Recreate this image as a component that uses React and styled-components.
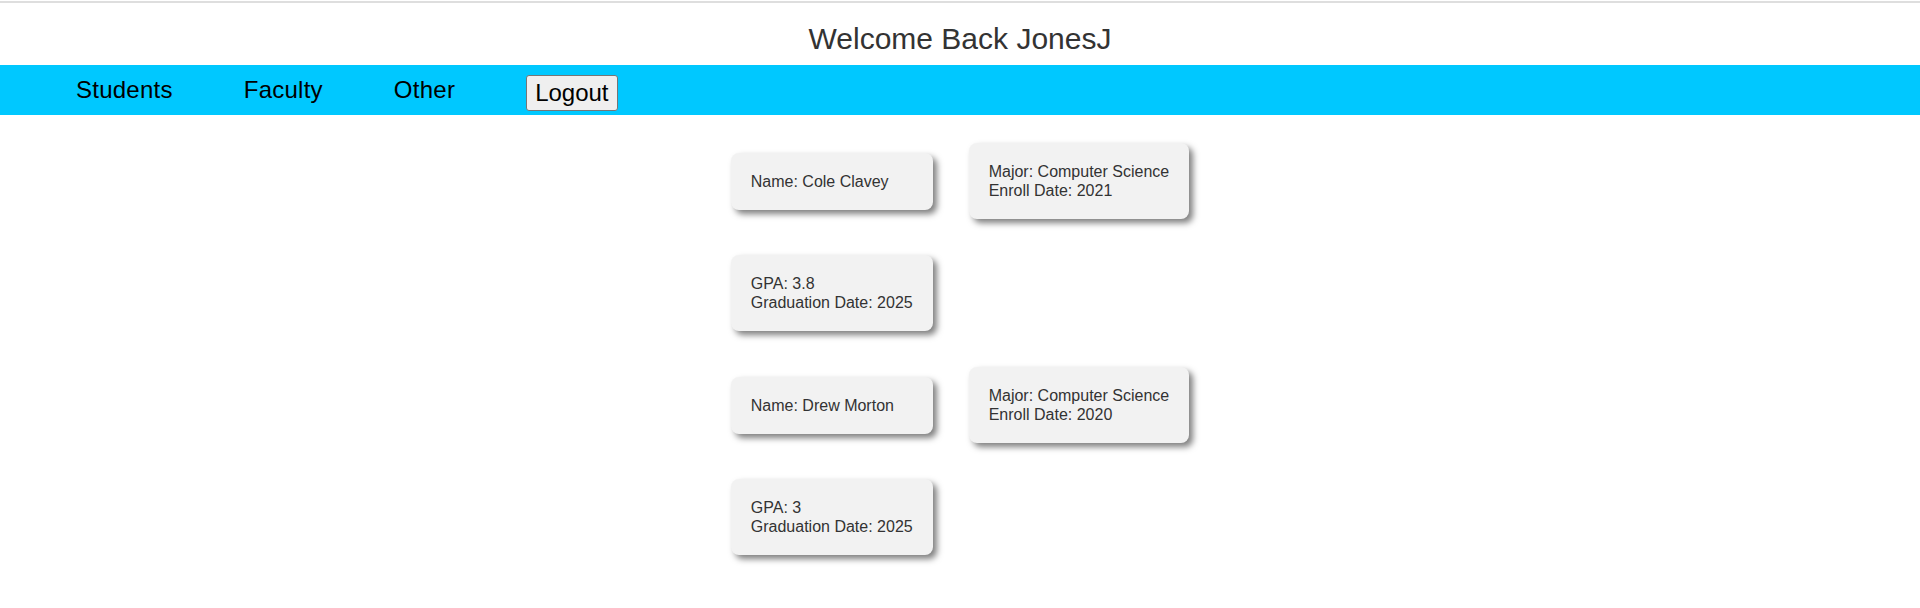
import React from 'react'
import styled, {createGlobalStyle} from 'styled-components'

const GlobalStyle = createGlobalStyle`
  body {
    margin: 0;
    background: #fff;
    font-family: "Liberation Sans", Arial, sans-serif;
  }
`

const TopRule = styled.div`
  margin-top: 1px;
  height: 2px;
  background: #dedede;
`

const Welcome = styled.h1`
  margin: 18px 0 9px;
  font-size: 30px;
  font-weight: normal;
  line-height: 35px;
  text-align: center;
  color: #333;
`

const NavBar = styled.nav`
  display: flex;
  align-items: center;
  gap: 71px;
  height: 50px;
  padding-left: 76px;
  background: #00c8ff;
`

const NavLink = styled.a`
  font-size: 24px;
  letter-spacing: 0.25px;
  color: #000;
  text-decoration: none;
  cursor: pointer;
`

const LogoutButton = styled.button`
  margin-top: 6px;
  padding: 3px 8px;
  font-family: inherit;
  font-size: 24px;
  line-height: normal;
  color: #000;
  background: #efefef;
  border: 1px solid #767676;
  border-radius: 3px;
`

const Main = styled.main`
  padding-top: 10px;
`

const StudentGrid = styled.section`
  display: grid;
  grid-template-columns: auto auto;
  justify-content: center;
  align-items: center;
`

const Card = styled.div`
  margin: 18px;
  padding: 19px 20px;
  font-size: 16px;
  line-height: 19px;
  color: #333;
  background: #f2f2f2;
  border-radius: 8px;
  box-shadow: 4px 4px 6px rgba(0, 0, 0, 0.5);
`

const students = [
  {name: 'Cole Clavey', major: 'Computer Science', enroll: 2021, gpa: '3.8', grad: 2025},
  {name: 'Drew Morton', major: 'Computer Science', enroll: 2020, gpa: '3', grad: 2025},
]

const StudentInfo = ({name, major, enroll, gpa, grad}) => (
  <StudentGrid>
    <Card>Name: {name}</Card>
    <Card>
      <div>Major: {major}</div>
      <div>Enroll Date: {enroll}</div>
    </Card>
    <Card>
      <div>GPA: {gpa}</div>
      <div>Graduation Date: {grad}</div>
    </Card>
  </StudentGrid>
)

const App = () => {
  return (
    <>
      <GlobalStyle />
      <TopRule />
      <Welcome>Welcome Back JonesJ</Welcome>
      <NavBar>
        <NavLink>Students</NavLink>
        <NavLink>Faculty</NavLink>
        <NavLink>Other</NavLink>
        <LogoutButton>Logout</LogoutButton>
      </NavBar>
      <Main>
        {students.map(s => (
          <StudentInfo key={s.name} {...s} />
        ))}
      </Main>
    </>
  )
}

export default App
